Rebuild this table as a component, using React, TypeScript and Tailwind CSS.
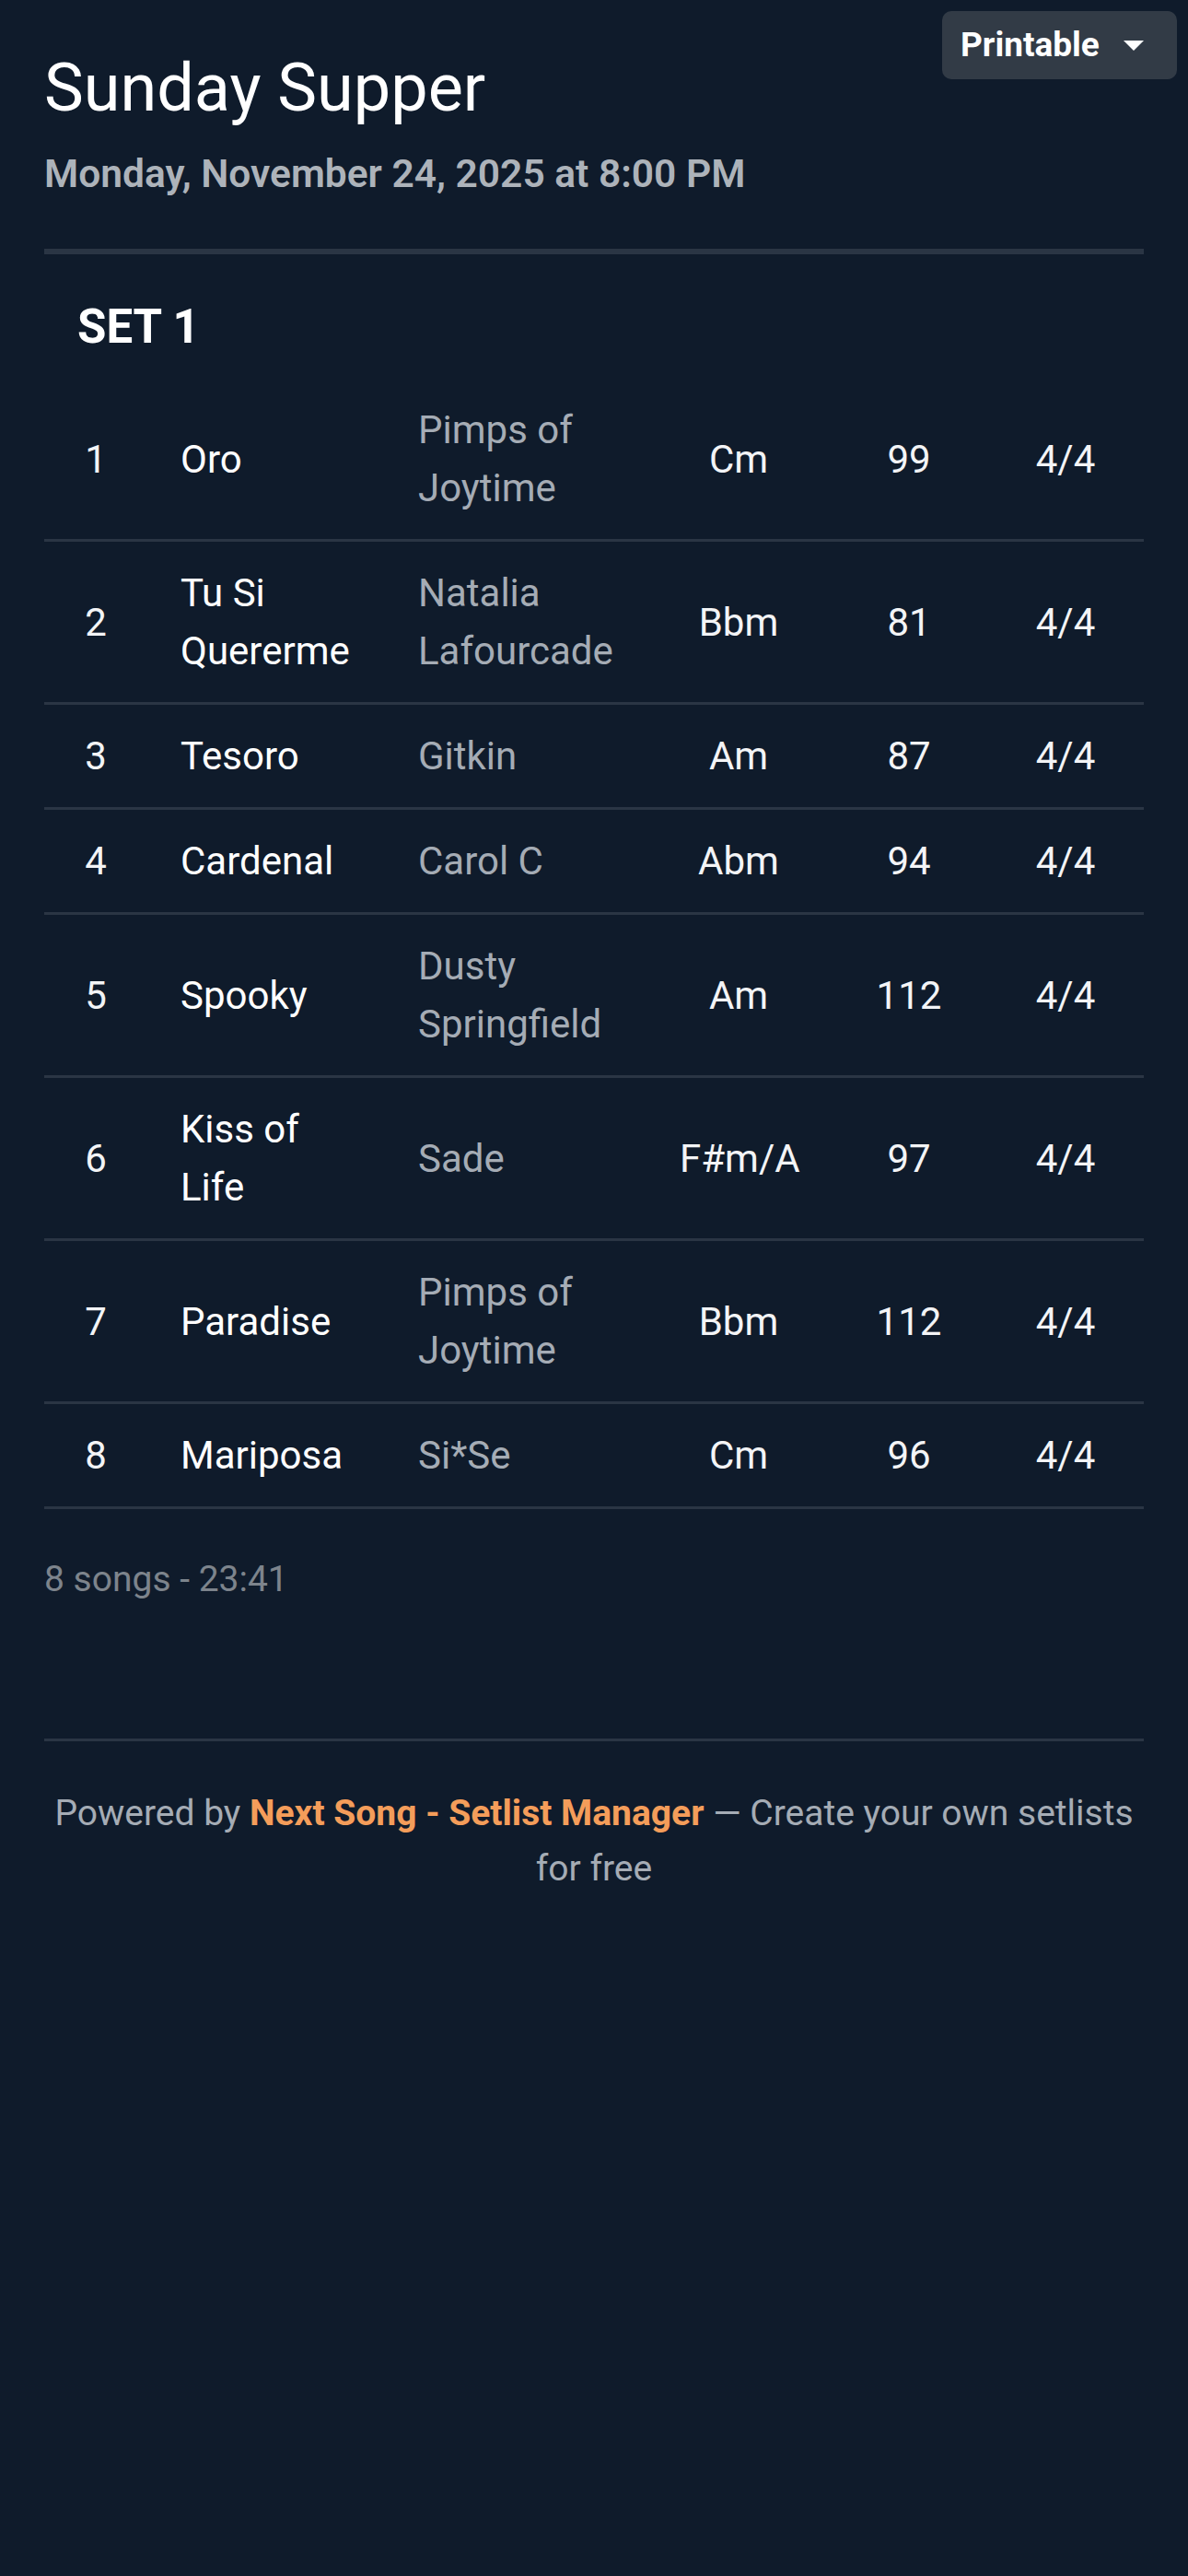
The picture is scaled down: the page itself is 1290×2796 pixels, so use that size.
import { useState } from 'react';

type Song = {
  n: number;
  title: string;
  artist: string;
  key: string;
  bpm: number;
  sig: string;
};

const SONGS: Song[] = [
  { n: 1, title: 'Oro', artist: 'Pimps of Joytime', key: 'Cm', bpm: 99, sig: '4/4' },
  { n: 2, title: 'Tu Si Quererme', artist: 'Natalia Lafourcade', key: 'Bbm', bpm: 81, sig: '4/4' },
  { n: 3, title: 'Tesoro', artist: 'Gitkin', key: 'Am', bpm: 87, sig: '4/4' },
  { n: 4, title: 'Cardenal', artist: 'Carol C', key: 'Abm', bpm: 94, sig: '4/4' },
  { n: 5, title: 'Spooky', artist: 'Dusty Springfield', key: 'Am', bpm: 112, sig: '4/4' },
  { n: 6, title: 'Kiss of Life', artist: 'Sade', key: 'F#m/A', bpm: 97, sig: '4/4' },
  { n: 7, title: 'Paradise', artist: 'Pimps of Joytime', key: 'Bbm', bpm: 112, sig: '4/4' },
  { n: 8, title: 'Mariposa', artist: 'Si*Se', key: 'Cm', bpm: 96, sig: '4/4' },
];

export default function App() {
  const [mode] = useState('Printable');

  return (
    <main className="relative min-h-screen bg-[#0f1b2b] px-[48px] pt-[48px] font-['Roboto','Noto_Sans',sans-serif] text-[#f3f4f6]">
      <button className="absolute right-[12px] top-[12px] flex h-[74px] w-[255px] items-center rounded-[10px] bg-[#323b46] pl-[20px] text-[37px] font-bold text-white">
        <span>{mode}</span>
        <svg className="ml-[26px] h-[11px] w-[22px]" viewBox="0 0 22 11">
          <path d="M0 0h22L11 11z" fill="currentColor" />
        </svg>
      </button>

      <header className="border-b-[6px] border-[#2a3544] pb-[51px]">
        <h1 className="text-[72px] leading-[96px] text-white">Sunday Supper</h1>
        <p className="mt-[15px] text-[42.5px] font-semibold leading-[60px] text-[#adb3ba]">
          Monday, November 24, 2025 at 8:00 PM
        </p>
      </header>

      <section className="mt-[43px]">
        <h2 className="px-[36px] text-[51px] font-bold leading-[72px] text-white">SET 1</h2>
        <div className="mt-[20px]">
          {SONGS.map((song) => (
            <div
              key={song.n}
              className="grid grid-cols-[112px_258px_284px_200px_170px_170px] items-center border-b-[3px] border-[#2a3544] text-[42px] leading-[63px]"
            >
              <div className="px-[36px] py-[24px] text-center">{song.n}</div>
              <div className="px-[36px] py-[24px] text-white">{song.title}</div>
              <div className="px-[36px] py-[24px] text-[#a5acb5]">{song.artist}</div>
              <div className="px-[36px] py-[24px] text-center">{song.key}</div>
              <div className="px-[36px] py-[24px] text-center">{song.bpm}</div>
              <div className="px-[36px] py-[24px] text-center">{song.sig}</div>
            </div>
          ))}
        </div>
        <p className="mt-[46px] text-[39px] leading-[60px] text-[#7d848c]">8 songs - 23:41</p>
      </section>

      <footer className="mt-[143px] border-t-[3px] border-[#2a3544] pt-[48px] text-center text-[39px] leading-[60px] text-[#a5acb5]">
        Powered by <span className="font-bold text-[#f49d5a]">Next Song - Setlist Manager</span> — Create your own setlists
        for free
      </footer>
    </main>
  );
}
